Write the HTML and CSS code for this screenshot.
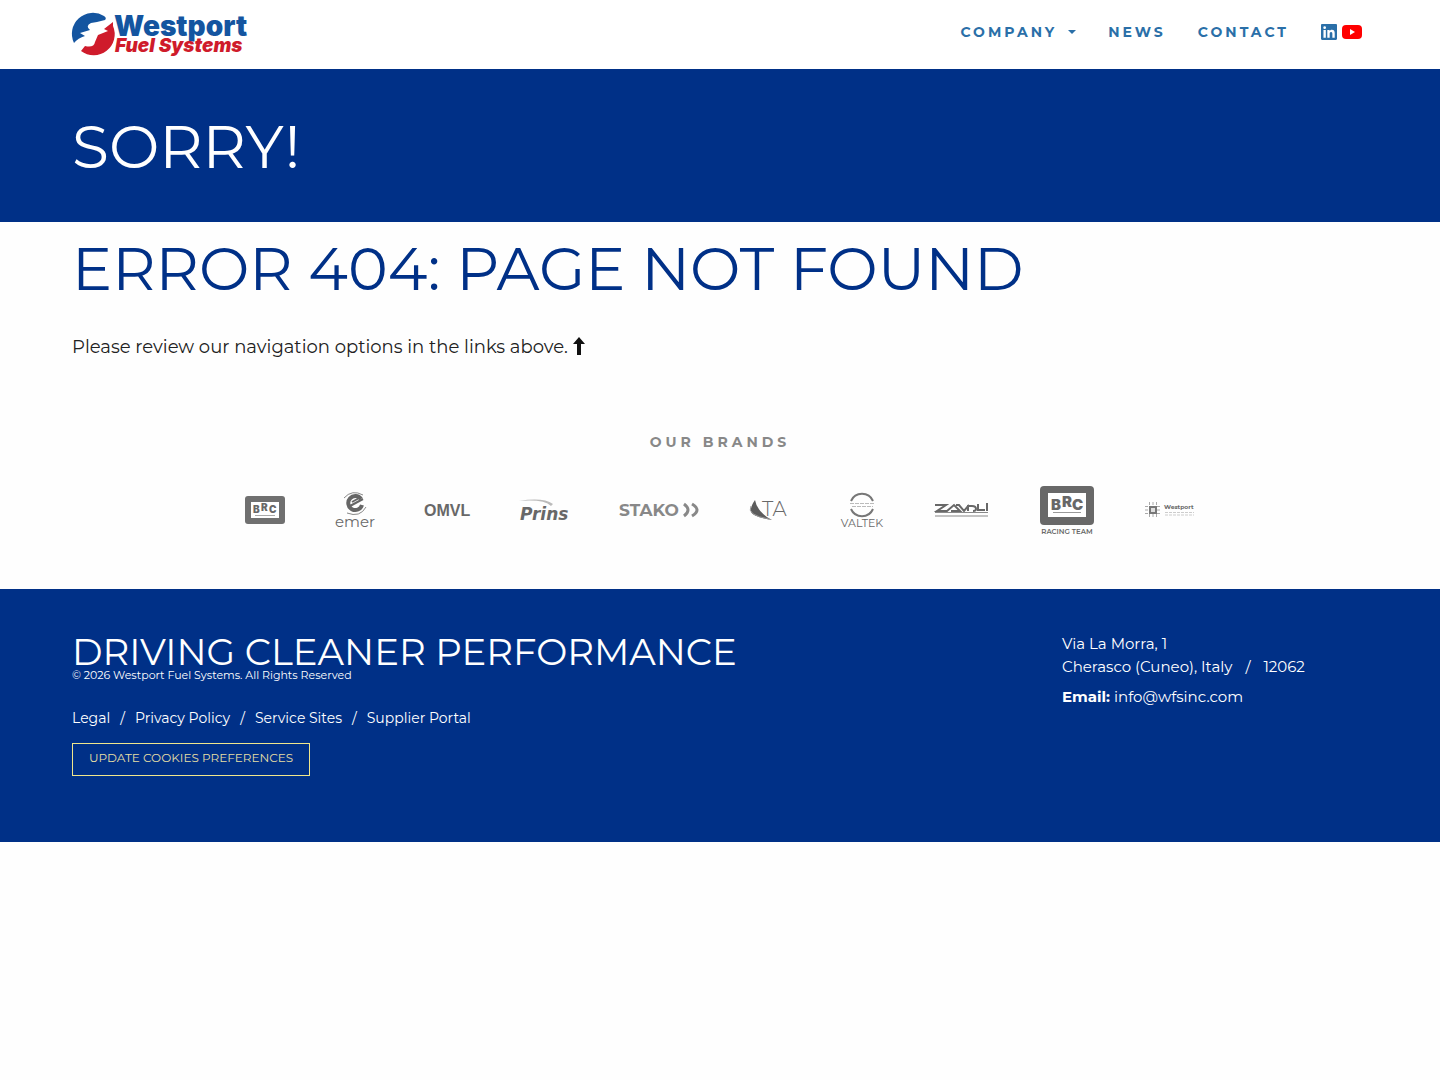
FILE: index.html
```html
<!DOCTYPE html>
<html lang="en">

<head>
    <meta charset="UTF-8">
    <meta name="viewport" content="width=device-width, initial-scale=1.0">
    <title>Page Not Found - Westport Fuel Systems</title>
    <link rel="stylesheet" href="styles.css">
</head>

<body>
    <!-- Header with logo and main navigation -->
    <header class="site-header">
        <a href="#" class="logo" aria-label="Westport Fuel Systems">
            <svg width="180" height="46" viewBox="0 0 180 46">
                <path d="M2 31A21 21 0 0 1 32 4Q35 6 33 8L25 10 19 11Q13 14 18 18L8 21 13 24Q6 26 2 31Z" fill="#1455a0" />
                <path d="M41 14A21 21 0 0 1 9 39L13 34Q22 36 23 30L26 23 36 19 32 17 41 10Z" fill="#cf1b2b" />
                <text x="42" y="24" class="logo-top">Westport</text>
                <text x="43" y="40" class="logo-bottom">Fuel Systems</text>
            </svg>
        </a>
        <nav class="main-nav">
            <a href="#">COMPANY <span class="caret"></span></a>
            <a href="#">NEWS</a>
            <a href="#">CONTACT</a>
            <div class="social">
                <a href="#" aria-label="LinkedIn">
                    <svg width="16" height="16" viewBox="0 0 448 448">
                        <path fill="#2a6fa8" d="M416 0H32C14 0 0 15 0 32v384c0 18 14 32 32 32h384c18 0 32-14 32-32V32c0-17-14-32-32-32zM135 384H69V170h66zM102 141a38 38 0 1 1 0-77 38 38 0 0 1 0 77zm282 243h-66V280c0-25-1-57-35-57s-40 27-40 55v106h-66V170h64v29h1c9-17 30-35 63-35 67 0 79 45 79 102z" />
                    </svg>
                </a>
                <a href="#" aria-label="YouTube">
                    <svg width="20" height="14" viewBox="0 0 20 14">
                        <rect width="20" height="14" rx="4" fill="#f00" />
                        <path d="M8 4l5 3-5 3z" fill="#fff" />
                    </svg>
                </a>
            </div>
        </nav>
    </header>

    <section class="hero">
        <h1>SORRY!</h1>
    </section>

    <main class="content">
        <h2>ERROR 404: PAGE NOT FOUND</h2>
        <p>Please review our navigation options in the links above.
            <svg class="arrow" width="12" height="18" viewBox="0 0 12 18"><path d="M6 0l6 7H8v11H4V7H0z" fill="#111" /></svg>
        </p>
    </main>

    <!-- Brand logos -->
    <section class="brands">
        <h3>OUR BRANDS</h3>
        <div class="brand-list">
            <a href="#" aria-label="BRC">
                <svg width="40" height="28" viewBox="0 0 40 28">
                    <rect width="40" height="28" rx="3" fill="#707070" />
                    <rect x="6" y="6" width="28" height="16" fill="#fff" />
                    <text x="8" y="17" class="brc-small">B</text>
                    <text x="16" y="15" class="brc-small">R</text>
                    <text x="24" y="17" class="brc-small">C</text>
                    <path d="M10 19.500h20" stroke="#aaa" />
                </svg>
            </a>
            <a href="#" aria-label="Emer">
                <svg width="40" height="36" viewBox="0 0 40 36">
                    <path d="M26 7A7 7 0 1 0 27 13" fill="none" stroke="#666" stroke-width="4" />
                    <path d="M15 14l13-7M17 10l9-5" stroke="#666" stroke-width="2" />
                    <path d="M9 6q8-9 19-3M31 15q-6 11-19 6" fill="none" stroke="#888" />
                    <text x="20" y="35" text-anchor="middle" class="emer">emer</text>
                </svg>
            </a>
            <a href="#" aria-label="OMVL">
                <svg width="44" height="18" viewBox="0 0 44 18">
                    <text x="-1" y="15" class="omvl">OMVL</text>
                </svg>
            </a>
            <a href="#" aria-label="Prins">
                <svg width="50" height="24" viewBox="0 0 50 24">
                    <path d="M0 3Q24-1 34 6l-2 2Q25 1 0 3Z" fill="#bbb" />
                    <text x="1" y="22" class="prins">Prins</text>
                </svg>
            </a>
            <a href="#" aria-label="Stako">
                <svg width="80" height="16" viewBox="0 0 80 16">
                    <text x="0" y="14" class="stako">STAKO</text>
                    <path d="M65 2q8 6 0 12M73 2q10 6 0 12" fill="none" stroke="#888" stroke-width="3" />
                </svg>
            </a>
            <a href="#" aria-label="TA">
                <svg width="40" height="22" viewBox="0 0 40 22">
                    <path d="M6 1Q8 13 23 21 4 18 2 13 1 8 6 1Z" fill="#5c5c5c" />
                    <path d="M2 7Q-3 16 20 20" fill="none" stroke="#999" />
                    <text x="13" y="17" class="ta">TA</text>
                </svg>
            </a>
            <a href="#" aria-label="Valtek">
                <svg width="46" height="36" viewBox="0 0 46 36">
                    <path d="M12 9a12 12 0 0 1 22 0M12 17a12 12 0 0 0 22 0" fill="none" stroke="#777" stroke-width="2" />
                    <path d="M11 11.500h24M13 14.500h21" stroke="#bbb" stroke-dasharray="4 1" />
                    <text x="23" y="35" text-anchor="middle" class="valtek">VALTEK</text>
                </svg>
            </a>
            <a href="#" aria-label="Zavoli">
                <svg width="54" height="14" viewBox="0 0 54 14">
                    <path d="M0 2h11L2 8h10l7-6 6 6h-9M21 2h3l5 6 5-6M33 8V3h4q4 0 4 3 0 2-3 2M43 1v6h7M52 0v8" fill="none" stroke="#686868" stroke-width="2" />
                    <path d="M0 9.500h53M0 13h53" stroke="#888" />
                </svg>
            </a>
            <a href="#" aria-label="BRC Racing Team">
                <svg width="56" height="50" viewBox="0 0 56 50">
                    <rect x="1" y="1" width="54" height="39" rx="4" fill="#686868" />
                    <rect x="9" y="8" width="38" height="24" fill="#fff" />
                    <text x="12" y="25" class="brc-large">B</text>
                    <text x="23" y="22" class="brc-large">R</text>
                    <text x="33" y="25" class="brc-large">C</text>
                    <path d="M14 27.500h28" stroke="#999" />
                    <text x="28" y="49" text-anchor="middle" class="racing">RACING TEAM</text>
                </svg>
            </a>
            <a href="#" aria-label="Westport Electronics">
                <svg width="50" height="16" viewBox="0 0 50 16">
                    <path d="M0 4.500h16M0 8h16M0 11.500h16M4.500 0v16M8 0v16M11.500 0v16" stroke="#aaa" stroke-dasharray="3 1" />
                    <rect x="4" y="4" width="8" height="8" fill="#777" />
                    <path d="M6 6h4v4H6z" fill="#ddd" />
                    <text x="19" y="7" class="electronics">Westport</text>
                    <path d="M20 10.500h29M20 13h29" stroke="#ccc" stroke-dasharray="3 1" />
                </svg>
            </a>
        </div>
    </section>

    <footer class="site-footer">
        <div class="footer-main">
            <div class="tagline">DRIVING CLEANER PERFORMANCE</div>
            <div class="copyright">© 2026 Westport Fuel Systems. All Rights Reserved</div>
            <div class="footer-links">
                <a href="#">Legal</a><span>/</span><a href="#">Privacy Policy</a><span>/</span><a href="#">Service Sites</a><span>/</span><a href="#">Supplier Portal</a>
            </div>
            <button type="button" class="cookies">UPDATE COOKIES PREFERENCES</button>
        </div>
        <address class="footer-address">
            <div>Via La Morra, 1</div>
            <div class="city">Cherasco (Cuneo), Italy<span>/</span>12062</div>
            <div><strong>Email:</strong> <a href="mailto:info@wfsinc.com">info@wfsinc.com</a></div>
        </address>
    </footer>
</body>

</html>
```
FILE: styles.css
```css
* {
    box-sizing: border-box;
}

body {
    margin: 0;
    background-color: #fefefe;
    color: #212121;
    font-family: Montserrat, Inter, sans-serif;
}

a {
    color: inherit;
    text-decoration: none;
}

svg {
    display: block;
    overflow: visible;
}

h1,
h2,
h3,
p {
    margin: 0;
}

/* Header */
.site-header {
    display: flex;
    justify-content: space-between;
    align-items: center;
    padding: 12px 78px 11px 72px;
    background-color: #fff;
}

.logo-top {
    font: 900 28px Inter, sans-serif;
    fill: #1455a0;
}

.logo-bottom {
    font: italic 900 19px Inter, sans-serif;
    fill: #cf1b2b;
}

.main-nav {
    display: flex;
    align-items: center;
    gap: 32px;
    padding-bottom: 6px;
    color: #2a6fa8;
    font-size: 14px;
    font-weight: 700;
    letter-spacing: 3px;
}

.caret {
    display: inline-block;
    margin-left: 4px;
    border: 4px solid transparent;
    border-top-color: #2a6fa8;
    border-bottom: 0;
    vertical-align: 3px;
}

.social {
    display: flex;
    align-items: center;
    gap: 5px;
}

/* Page title */
.hero {
    padding: 46px 72px 43px;
    background-color: #003087;
    color: #fff;
}

.hero h1,
.content h2 {
    font-size: 60px;
    font-weight: 400;
    line-height: 64px;
}

.content {
    padding: 15px 72px 0;
}

.content h2 {
    color: #003087;
}

.content p {
    margin-top: 32px;
    font-size: 18px;
    line-height: 28px;
}

.arrow {
    display: inline-block;
    vertical-align: -2px;
}

/* Brands */
.brands {
    padding: 69px 72px 54px;
    text-align: center;
}

.brands h3 {
    color: #888;
    font-size: 14px;
    font-weight: 700;
    line-height: 24px;
    letter-spacing: 4px;
}

.brand-list {
    display: flex;
    flex-wrap: wrap;
    justify-content: center;
    align-items: center;
    gap: 50px;
    margin-top: 31px;
}

.brand-list text {
    fill: #686868;
}

.brc-small {
    font: 900 10px Inter, sans-serif;
}

.brc-large {
    font: 900 15px Inter, sans-serif;
}

.emer {
    font: 15px Montserrat, Inter, sans-serif;
}

.omvl {
    font: 700 16px "Liberation Sans", sans-serif;
}

.prins {
    font: italic 700 17px "DejaVu Sans", sans-serif;
}

.brand-list .stako {
    font: 700 17px Montserrat, Lato, sans-serif;
    fill: #888;
}

.ta {
    font: 300 20px Montserrat, Inter, sans-serif;
}

.valtek {
    font: 11px Montserrat, Inter, sans-serif;
}

.racing {
    font: 600 7px Montserrat, Inter, sans-serif;
}

.electronics {
    font: 700 6px Montserrat, Inter, sans-serif;
}

/* Footer */
.site-footer {
    display: flex;
    justify-content: space-between;
    padding: 43px 72px 66px;
    background-color: #003087;
    color: #fff;
}

.footer-main {
    padding-top: 3px;
}

.tagline {
    font-size: 37px;
    font-weight: 400;
    line-height: 34px;
}

.copyright {
    font-size: 11px;
    line-height: 12px;
}

.footer-links {
    margin-top: 25px;
    font-size: 14px;
    line-height: 24px;
}

.footer-links span {
    margin: 0 10px;
}

.cookies {
    margin-top: 13px;
    padding: 6px 16px 9px;
    border: 1px solid #f0e68c;
    background: none;
    color: #e6dfa5;
    font-family: inherit;
    font-size: 12px;
    line-height: 16px;
}

.footer-address {
    width: 306px;
    font-size: 15px;
    font-style: normal;
    line-height: 23px;
}

.city {
    margin-bottom: 7px;
}

.city span {
    margin: 0 13px;
}
```
